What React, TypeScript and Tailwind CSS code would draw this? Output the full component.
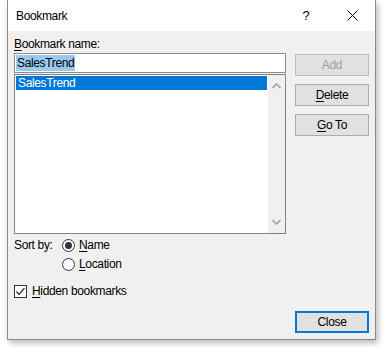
import React from 'react';

const font = "font-['Liberation_Sans',Arial,sans-serif] text-[12px] tracking-[-0.35px] text-black";

function U({ children }: { children: React.ReactNode }) {
  return <span className="underline underline-offset-[2px] decoration-[1px]">{children}</span>;
}

function Button({
  children,
  disabled,
  primary,
}: {
  children: React.ReactNode;
  disabled?: boolean;
  primary?: boolean;
}) {
  return (
    <button
      className={`h-[22px] w-[74px] flex items-center justify-center leading-none ${
        primary
          ? 'border-2 border-[#0078d7] bg-[#e1e1e1]'
          : disabled
          ? 'border border-[#bfbfbf] bg-[#e1e1e1] text-[#a0a0a0]'
          : 'border border-[#adadad] bg-[#e1e1e1]'
      }`}
    >
      {children}
    </button>
  );
}

function Radio({ checked }: { checked?: boolean }) {
  return (
    <span className="w-[13px] h-[13px] rounded-full border border-[#333333] bg-white flex items-center justify-center shrink-0">
      {checked && <span className="w-[7px] h-[7px] rounded-full bg-[#333333]" />}
    </span>
  );
}

function Chevron({ up }: { up?: boolean }) {
  return (
    <svg width="9" height="6" viewBox="0 0 9 6">
      <path
        d={up ? 'M0.5 5 L4.5 1 L8.5 5' : 'M0.5 1 L4.5 5 L8.5 1'}
        fill="none"
        stroke="#a3a3a3"
        strokeWidth="1.6"
      />
    </svg>
  );
}

export default function App() {
  return (
    <div className={`w-[384px] h-[348px] bg-white overflow-hidden ${font}`}>
      <div className="ml-[7px] w-[369px] h-[340px] border-x border-b border-[#8a8a8a] bg-[#f0f0f0] flex flex-col shadow-[2px_3px_6px_rgba(0,0,0,0.28)]">
        {/* Title bar */}
        <div className="h-[31px] bg-white flex items-center shrink-0">
          <div className="pl-[8px] flex-1 text-[12px]">Bookmark</div>
          <div className="w-[46px] h-full flex items-center justify-center text-[13px]">?</div>
          <div className="w-[46px] h-full flex items-center justify-center">
            <svg width="11" height="11" viewBox="0 0 11 11">
              <path d="M0.5 0.5 L10.5 10.5 M10.5 0.5 L0.5 10.5" stroke="#000" strokeWidth="1" />
            </svg>
          </div>
        </div>

        {/* Body */}
        <div className="flex-1 flex px-[6px] pb-[6px] gap-[9px]">
          <div className="w-[272px] flex flex-col pt-[5px]">
            <div className="h-[16px] leading-[16px] mb-[1px]">
              <U>B</U>ookmark name:
            </div>
            <div className="h-[20px] border border-[#8c8c8c] bg-white flex items-center pl-[1px]">
              <span className="bg-[#99c9ef] h-[16px] leading-[16px] px-[1px]">SalesTrend</span>
            </div>
            <div className="mt-[1px] h-[160px] border border-[#828282] bg-white flex">
              <div className="flex-1 p-[1px]">
                <div className="h-[14px] leading-[14px] bg-[#0078d7] text-white pl-[2px]">SalesTrend</div>
              </div>
              <div className="w-[17px] bg-[#f0f0f0] flex flex-col items-center justify-between py-[8px]">
                <Chevron up />
                <Chevron />
              </div>
            </div>

            <div className="mt-[3px] flex">
              <div className="w-[48px] h-[16px] leading-[16px]">Sort by:</div>
              <div className="flex flex-col gap-[3px]">
                <label className="h-[16px] flex items-center gap-[4px]">
                  <Radio checked />
                  <span>
                    <U>N</U>ame
                  </span>
                </label>
                <label className="h-[16px] flex items-center gap-[4px]">
                  <Radio />
                  <span>
                    <U>L</U>ocation
                  </span>
                </label>
              </div>
            </div>

            <label className="mt-[11px] h-[16px] flex items-center gap-[5px]">
              <span className="w-[13px] h-[13px] border border-[#333333] bg-white flex items-center justify-center">
                <svg width="11" height="11" viewBox="0 0 11 11">
                  <path d="M1.5 5.5 L4 8.5 L9.5 2" fill="none" stroke="#333" strokeWidth="1.2" />
                </svg>
              </span>
              <span>
                <U>H</U>idden bookmarks
              </span>
            </label>
          </div>

          <div className="w-[74px] flex flex-col justify-between pt-[23px]">
            <div className="flex flex-col gap-[8px]">
              <Button disabled>Add</Button>
              <Button>
                <span>
                  <U>D</U>elete
                </span>
              </Button>
              <Button>
                <span>
                  <U>G</U>o To
                </span>
              </Button>
            </div>
            <Button primary>Close</Button>
          </div>
        </div>
      </div>
    </div>
  );
}
